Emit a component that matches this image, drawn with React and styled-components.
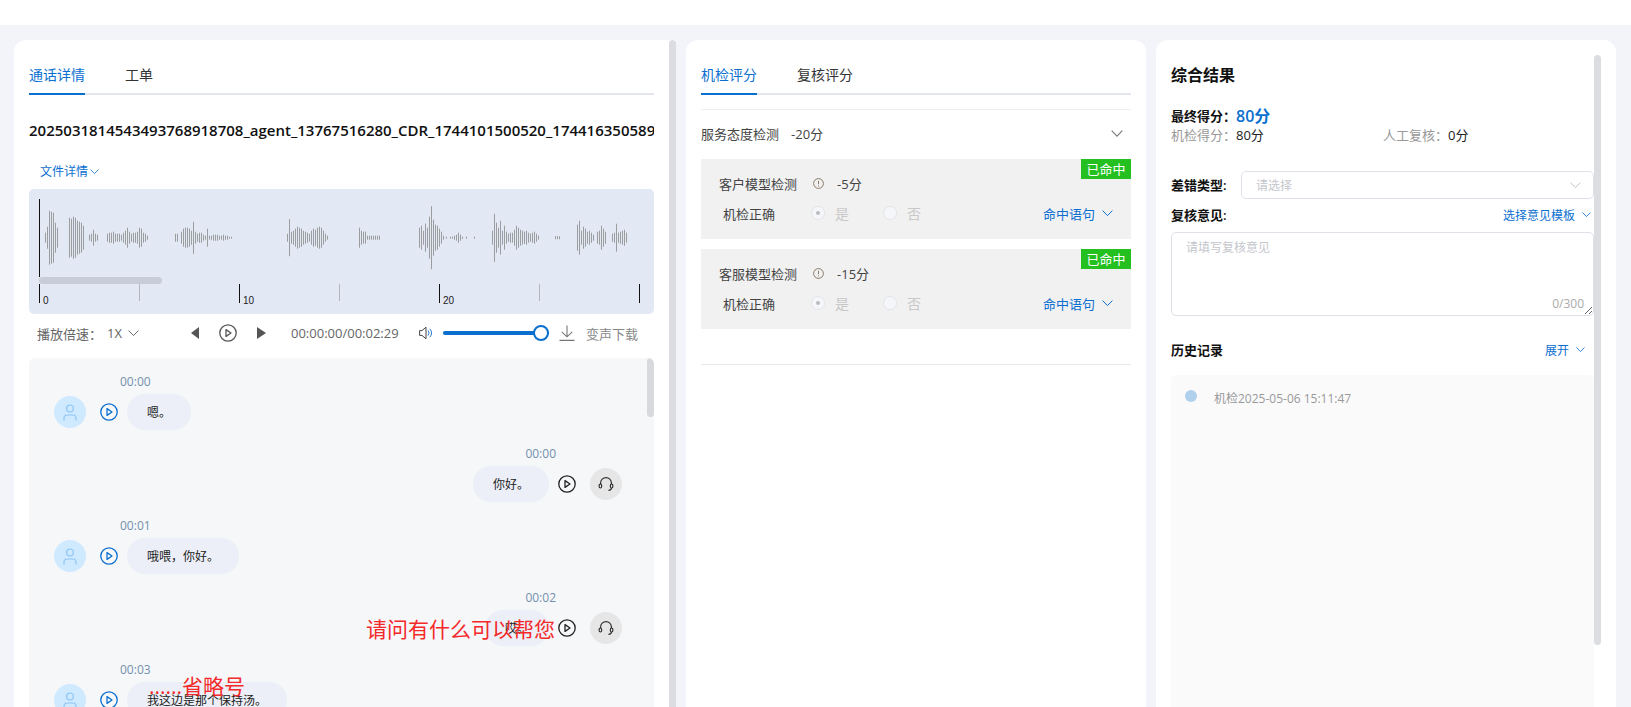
import styled, { createGlobalStyle } from 'styled-components'
import { Fragment } from 'react'

const BLUE = '#0b6fd0'

const GlobalStyle = createGlobalStyle`
    html, body {
        margin: 0;
        height: 100%;
        overflow: hidden;
    }
    body {
        background: #f3f4f9;
        font-family: "Open Sans", "Noto Sans CJK SC", sans-serif;
        font-size: 13px;
        color: #333;
    }
    * { box-sizing: border-box; }
`

const waveClusters = [
    [45, [10, 22, 54, 52, 50, 30, 20]],
    [69, [40, 38, 42, 40, 34, 32, 30, 24]],
    [89, [6, 8, 16, 8, 6]],
    [107, [8, 10, 10, 12, 8, 8, 8, 6, 10, 14, 20, 12, 8, 10, 10, 12, 20, 18, 10, 8, 4]],
    [175, [8, 8, 0, 12, 18, 20, 20, 18, 14, 32, 12, 8, 10, 10, 6, 4, 18, 4, 4, 6, 6, 6, 4, 4, 6, 4, 4, 2, 2]],
    [287, [8, 37, 12, 14, 18, 22, 20, 18, 14, 12, 10, 8, 14, 18, 16, 20, 22, 20, 14, 8, 4]],
    [359, [20, 14, 12, 12, 4, 4, 4, 4, 4, 4, 4]],
    [419, [20, 24, 14, 28, 20, 42, 63, 36, 26, 24, 18, 12, 4]],
    [446, [2, 0, 2, 2, 4, 6, 10, 6, 2, 0, 2, 0, 0, 0, 2]],
    [492, [14, 48, 30, 20, 34, 14, 24, 12, 8, 10, 10, 16, 24, 20, 16, 14, 12, 14, 10, 8, 10, 12, 8, 4]],
    [555, [3, 3, 3]],
    [577, [26, 34, 14, 22, 18, 12, 14, 10, 6]],
    [597, [12, 14, 24, 18, 12]],
    [612, [8, 10, 28, 10, 12, 14, 16, 10]],
]

const rulerTicks = [
    { x: 39.5, label: '0', major: true },
    { x: 139.5 },
    { x: 239.5, label: '10', major: true },
    { x: 339.5 },
    { x: 439.5, label: '20', major: true },
    { x: 539.5 },
    { x: 639.5, major: true },
]

const COLON = '\uFF1A'

const messages = [
    { time: '00:00', text: '嗯。', side: 'left' },
    { time: '00:00', text: '你好。', side: 'right' },
    { time: '00:01', text: '哦喂\uFF0C你好。', side: 'left' },
    { time: '00:02', text: '哎。', side: 'right' },
    { time: '00:03', text: '我这边是那个保持汤。', side: 'left' },
]

const checks = [
    { name: '客户模型检测', score: '-5分' },
    { name: '客服模型检测', score: '-15分' },
]

function Chevron({ size = 11, color = '#666' }) {
    return (
        <svg width={size} height={size * 0.6} viewBox="0 0 11 6.6" fill="none" stroke={color} strokeWidth="1">
            <path d="M.6.6l4.9 5 4.9-5" />
        </svg>
    )
}

function PlayIcon({ color = BLUE, size = 18 }) {
    return (
        <svg width={size} height={size} viewBox="0 0 18 18" fill="none" stroke={color} strokeWidth="1.3">
            <circle cx="9" cy="9" r="8.2" />
            <path d="M7 5.6v6.8l5-3.4z" strokeLinejoin="round" />
        </svg>
    )
}

function UserIcon() {
    return (
        <svg width="14" height="17" viewBox="0 0 14 17" fill="none" stroke="#8fc6f6" strokeWidth="1.2">
            <circle cx="7" cy="4.4" r="3.4" />
            <path d="M1 16.5v-2.3c0-2 1.5-3.2 3.2-3.2h5.6c1.7 0 3.2 1.2 3.2 3.2v2.3" />
        </svg>
    )
}

function HeadsetIcon() {
    return (
        <svg width="16" height="16" viewBox="0 0 16 16" fill="none" stroke="#333" strokeWidth="1.2">
            <path d="M2.6 8.2V7a5.4 5.4 0 0 1 10.8 0v1.2" />
            <rect x="1.2" y="8" width="2.4" height="4" rx="1.2" />
            <rect x="12.4" y="8" width="2.4" height="4" rx="1.2" />
            <path d="M13.4 12c0 1.5-1.2 2.3-3 2.3" />
        </svg>
    )
}

function VolumeIcon() {
    return (
        <svg width="13" height="14" viewBox="0 0 13 14" fill="none" stroke="#444" strokeWidth="1">
            <path d="M.6 4.6H3L7 1.2v11.6L3 9.4H.6z" strokeLinejoin="round" />
            <path d="M9 4.4a4 4 0 0 1 0 5.2M10.8 2.8a6.5 6.5 0 0 1 0 8.4" stroke="#2b79c9" />
        </svg>
    )
}

function DownloadIcon() {
    return (
        <svg width="16" height="16" viewBox="0 0 16 16" fill="none" stroke="#777" strokeWidth="1.1">
            <path d="M8 .5v11M2.8 6.8L8 11.8l5.2-5M.5 15.4h15" />
        </svg>
    )
}

function InfoIcon() {
    return (
        <svg width="11" height="11" viewBox="0 0 11 11" fill="none" stroke="#8a7a68" strokeWidth="1">
            <circle cx="5.5" cy="5.5" r="4.9" />
            <path d="M5.5 2.8v3.4M5.5 7.4v1" />
        </svg>
    )
}

function Waveform() {
    return (
        <svg width="625" height="125" viewBox="0 0 625 125">
            {waveClusters.map(([start, heights], c) =>
                heights.map((h, i) => (
                    <rect key={`${c}-${i}`} x={start - 29 + i * 2} y={48.7 - h / 2} width="1" height={h} fill="#9c9d9f" />
                ))
            )}
            <rect x="10" y="10" width="1" height="78" fill="#111" />
            <rect x="10" y="88" width="123" height="7" rx="3.5" fill="#c8ccd9" />
            {rulerTicks.map((t) => (
                <Fragment key={t.x}>
                    <rect x={t.x - 29.5} y="95" width="1" height={t.major ? 19 : 17} fill={t.major ? '#111' : '#b4b6bb'} />
                    {t.label && (
                        <text x={t.x - 29.5 + 4} y="114.5" fontSize="10" fontFamily="Liberation Sans, sans-serif" fill="#222">
                            {t.label}
                        </text>
                    )}
                </Fragment>
            ))}
        </svg>
    )
}

function ChatRow({ msg }) {
    const right = msg.side === 'right'
    return (
        <Row>
            <MsgTime $right={right}>{msg.time}</MsgTime>
            <MsgBody $right={right}>
                {right ? (
                    <>
                        <Bubble>{msg.text}</Bubble>
                        <PlayIcon color="#222" />
                        <Avatar $agent><HeadsetIcon /></Avatar>
                    </>
                ) : (
                    <>
                        <Avatar><UserIcon /></Avatar>
                        <PlayIcon />
                        <Bubble>{msg.text}</Bubble>
                    </>
                )}
            </MsgBody>
        </Row>
    )
}

function CheckCard({ item }) {
    return (
        <Card>
            <Badge>已命中</Badge>
            <CardHead>
                <span>{item.name}</span>
                <InfoIcon />
                <span>{item.score}</span>
            </CardHead>
            <CardLine>
                <CardLabel>机检正确</CardLabel>
                <RadioOption><Radio $checked />是</RadioOption>
                <RadioOption><Radio />否</RadioOption>
                <MoreLink>命中语句<Chevron color={BLUE} /></MoreLink>
            </CardLine>
        </Card>
    )
}

export default function App() {
    return (
        <>
            <GlobalStyle />
            <TopBar />
            <Main>
                <LeftPanel>
                    <LeftContent>
                        <Tabs>
                            <Tab $active>通话详情</Tab>
                            <Tab>工单</Tab>
                        </Tabs>
                        <FileTitle>2025031814543493768918708_agent_13767516280_CDR_1744101500520_174416350589</FileTitle>
                        <FileLink>文件详情<Chevron size={9} color={BLUE} /></FileLink>
                        <WaveBox><Waveform /></WaveBox>
                        <Controls>
                            <Speed>播放倍速{COLON}<SpeedValue>1X</SpeedValue><Chevron color="#666" /></Speed>
                            <Transport>
                                <svg width="8" height="12" viewBox="0 0 8 12"><path d="M8 0v12L0 6z" fill="#555" /></svg>
                                <PlayIcon color="#555" />
                                <svg width="9" height="12" viewBox="0 0 9 12"><path d="M0 0v12l9-6z" fill="#555" /></svg>
                            </Transport>
                            <TimeText>00:00:00/00:02:29</TimeText>
                            <VolumeIcon />
                            <Slider><SliderFill /><SliderKnob /></Slider>
                            <DownloadIcon />
                            <DownloadText>变声下载</DownloadText>
                        </Controls>
                        <Chat>
                            {messages.map((m, i) => <ChatRow key={i} msg={m} />)}
                            <ChatBar />
                            <RedNote $top={259} $left={337}>请问有什么可以帮您</RedNote>
                            <RedNote $top={316} $left={120}>......省略号</RedNote>
                        </Chat>
                    </LeftContent>
                    <PanelBar />
                </LeftPanel>

                <MiddlePanel>
                    <Tabs>
                        <Tab $active>机检评分</Tab>
                        <Tab $wide>复核评分</Tab>
                    </Tabs>
                    <Section>
                        <SectionHead>
                            <SectionName>服务态度检测</SectionName>
                            <span>-20分</span>
                            <SectionChevron><Chevron color="#777" size={12} /></SectionChevron>
                        </SectionHead>
                        <CardList>
                            {checks.map((c) => <CheckCard key={c.name} item={c} />)}
                        </CardList>
                    </Section>
                </MiddlePanel>

                <RightPanel>
                    <RightContent>
                        <ResultTitle>综合结果</ResultTitle>
                        <FinalScore>
                            <BoldLabel $width={65}>最终得分{COLON}</BoldLabel>
                            <FinalValue>80分</FinalValue>
                        </FinalScore>
                        <Stats>
                            <Stat $width={212}><StatLabel $width={65}>机检得分{COLON}</StatLabel>80分</Stat>
                            <Stat><StatLabel $width={65}>人工复核{COLON}</StatLabel>0分</Stat>
                        </Stats>
                        <SelectRow>
                            <BoldLabel $width={70}>差错类型:</BoldLabel>
                            <SelectBox>
                                请选择
                                <Chevron color="#c4c6cc" />
                            </SelectBox>
                        </SelectRow>
                        <OpinionHead>
                            <BoldLabel>复核意见:</BoldLabel>
                            <BlueLink $pad={3}>选择意见模板<Chevron color={BLUE} size={9} /></BlueLink>
                        </OpinionHead>
                        <OpinionWrap>
                            <Opinion placeholder="请填写复核意见" />
                            <Counter>0/300</Counter>
                        </OpinionWrap>
                        <HistoryHead>
                            <BoldLabel>历史记录</BoldLabel>
                            <BlueLink $pad={9}>展开<Chevron color={BLUE} size={9} /></BlueLink>
                        </HistoryHead>
                        <History>
                            <HistoryDot />
                            <HistoryText>机检2025-05-06 15:11:47</HistoryText>
                        </History>
                    </RightContent>
                    <RightBar />
                </RightPanel>
            </Main>
        </>
    )
}

const TopBar = styled.div`
    height: 25px;
    background: #fff;
`

const Main = styled.div`
    display: flex;
    height: 682px;
    padding: 15px 15px 0 14px;
`

const PanelBase = styled.div`
    background: #fff;
    border-radius: 12px 12px 0 0;
    height: 667px;
    overflow: hidden;
`

const LeftPanel = styled(PanelBase)`
    display: flex;
    width: 662px;
    padding-left: 15px;
    border-top-right-radius: 0;
`

const LeftContent = styled.div`
    display: flex;
    flex-direction: column;
    width: 625px;
    margin-right: 15px;
`

const PanelBar = styled.div`
    width: 7px;
    height: 100%;
    background: #dcdde0;
    border-radius: 4px 4px 0 0;
`

const Tabs = styled.div`
    display: flex;
    margin-top: 24px;
    flex-shrink: 0;
    border-bottom: 2px solid #e3e6ef;
`

const Tab = styled.div`
    height: 31px;
    line-height: 22px;
    font-size: 14px;
    margin: 0 ${({ $wide }) => ($wide ? 0 : '40px')} -2px 0;
    color: ${({ $active }) => ($active ? BLUE : '#333')};
    border-bottom: 2px solid ${({ $active }) => ($active ? BLUE : 'transparent')};
`

const FileTitle = styled.div`
    margin-top: 24px;
    line-height: 22px;
    font-size: 15px;
    font-weight: 600;
    color: #111;
    white-space: nowrap;
    overflow: hidden;
`

const FileLink = styled.div`
    display: flex;
    align-items: center;
    gap: 2px;
    margin: 21px 0 0 11px;
    line-height: 20px;
    font-size: 12px;
    color: ${BLUE};
`

const WaveBox = styled.div`
    height: 125px;
    margin-top: 7px;
    background: #e3e8f5;
    border-radius: 5px;
    flex-shrink: 0;
    svg { display: block; }
`

const Controls = styled.div`
    display: flex;
    align-items: center;
    height: 22px;
    margin-top: 8px;
    flex-shrink: 0;
    padding-left: 8px;
    color: #666;
`

const Speed = styled.div`
    display: flex;
    align-items: center;
    width: 154px;
    font-size: 13px;
`

const SpeedValue = styled.span`
    margin: 0 6px 0 5px;
`

const Transport = styled.div`
    display: flex;
    align-items: center;
    gap: 20px;
`

const TimeText = styled.span`
    width: 128px;
    margin-left: 25px;
    font-size: 13px;
    white-space: nowrap;
`

const Slider = styled.div`
    position: relative;
    width: 106px;
    height: 4px;
    margin: 0 10px 0 11px;
    border-radius: 2px;
    background: #d6dbe6;
`

const SliderFill = styled.div`
    height: 100%;
    border-radius: 2px;
    background: ${BLUE};
`

const SliderKnob = styled.div`
    position: absolute;
    right: 0;
    top: -6px;
    width: 16px;
    height: 16px;
    border-radius: 50%;
    background: #fff;
    border: 2.5px solid ${BLUE};
`

const DownloadText = styled.span`
    margin-left: 11px;
    font-size: 13px;
    color: #888;
    white-space: nowrap;
`

const Chat = styled.div`
    position: relative;
    flex: 1;
    min-height: 0;
    margin-top: 14px;
    padding-top: 15px;
    background: #f6f7f9;
    border-radius: 6px 6px 0 0;
    overflow: hidden;
`

const ChatBar = styled.div`
    position: absolute;
    top: 0;
    right: 0;
    width: 7px;
    height: 59px;
    background: #d8d9dc;
    border-radius: 4px;
`

const RedNote = styled.div`
    position: absolute;
    top: ${({ $top }) => $top}px;
    left: ${({ $left }) => $left}px;
    line-height: 24px;
    font-size: 21px;
    color: #f42a2a;
    white-space: nowrap;
`

const Row = styled.div`
    margin-bottom: 15px;
`

const MsgTime = styled.div`
    line-height: 18px;
    font-size: 12px;
    color: #7390ad;
    margin: 0 ${({ $right }) => ($right ? '98px' : 0)} 3px ${({ $right }) => ($right ? 0 : '91px')};
    text-align: ${({ $right }) => ($right ? 'right' : 'left')};
`

const MsgBody = styled.div`
    display: flex;
    align-items: center;
    justify-content: ${({ $right }) => ($right ? 'flex-end' : 'flex-start')};
    gap: 9px;
    padding: 0 ${({ $right }) => ($right ? '32px' : 0)} 0 ${({ $right }) => ($right ? 0 : '25px')};
`

const Avatar = styled.div`
    display: flex;
    align-items: center;
    justify-content: center;
    width: 32px;
    height: 32px;
    border-radius: 50%;
    margin: ${({ $agent }) => ($agent ? '0 0 0 5px' : '0 5px 0 0')};
    background: ${({ $agent }) => ($agent ? '#e6e6e6' : '#cfe9ff')};
`

const Bubble = styled.div`
    height: 36px;
    line-height: 37px;
    padding: 0 20px;
    border-radius: 18px;
    background: #eceff7;
    font-size: 12px;
    color: #222;
    white-space: nowrap;
`

const MiddlePanel = styled(PanelBase)`
    width: 460px;
    margin-left: 10px;
    padding: 0 15px;
`

const Section = styled.div`
    margin-top: 14px;
    padding-bottom: 35px;
    border-top: 1px solid #eceef3;
    border-bottom: 1px solid #e8eaf0;
`

const SectionHead = styled.div`
    display: flex;
    align-items: center;
    height: 49px;
    padding: 0 8px 2px 0;
    font-size: 13px;
    color: #444;
`

const SectionName = styled.span`
    margin-right: 12px;
`

const SectionChevron = styled.span`
    display: flex;
    margin-left: auto;
`

const CardList = styled.div`
    display: flex;
    flex-direction: column;
    gap: 10px;
`

const Card = styled.div`
    position: relative;
    height: 80px;
    padding-top: 14px;
    background: #f1f1f2;
    font-size: 13px;
    color: #444;
`

const Badge = styled.div`
    position: absolute;
    top: 0;
    right: 0;
    width: 50px;
    height: 20px;
    line-height: 20px;
    text-align: center;
    background: #23c01f;
    color: #fff;
    font-size: 13px;
`

const CardHead = styled.div`
    display: flex;
    align-items: center;
    height: 20px;
    gap: 16px;
    padding-left: 18px;
    svg { margin-right: -3px; }
`

const CardLine = styled.div`
    display: flex;
    align-items: center;
    height: 20px;
    margin-top: 10px;
    padding: 0 18px 0 22px;
`

const CardLabel = styled.span`
    width: 88px;
`

const RadioOption = styled.span`
    display: flex;
    align-items: center;
    gap: 10px;
    width: 72px;
    font-size: 14px;
    color: #c8c8c8;
`

const Radio = styled.span`
    display: flex;
    align-items: center;
    justify-content: center;
    width: 14px;
    height: 14px;
    border-radius: 50%;
    border: 1px solid #e3e5ea;
    background: #f5f6f9;
    &::after {
        content: '';
        width: 4px;
        height: 4px;
        border-radius: 50%;
        background: ${({ $checked }) => ($checked ? '#b9bbc0' : 'transparent')};
    }
`

const MoreLink = styled.span`
    display: flex;
    align-items: center;
    gap: 7px;
    margin-left: auto;
    color: ${BLUE};
`

const RightPanel = styled(PanelBase)`
    display: flex;
    width: 460px;
    margin-left: 10px;
    padding-left: 15px;
`

const RightContent = styled.div`
    width: 423px;
    padding-top: 24px;
`

const RightBar = styled.div`
    width: 7px;
    height: 590px;
    margin-top: 15px;
    background: #dcdde0;
    border-radius: 4px;
`

const ResultTitle = styled.div`
    line-height: 22px;
    font-size: 16px;
    font-weight: 600;
    color: #111;
`

const FinalScore = styled.div`
    display: flex;
    align-items: center;
    height: 20px;
    margin-top: 20px;
`

const BoldLabel = styled.span`
    flex-shrink: 0;
    width: ${({ $width }) => ($width ? `${$width}px` : 'auto')};
    margin-bottom: 2px;
    font-size: 13px;
    font-weight: 600;
    color: #111;
    white-space: nowrap;
`

const FinalValue = styled.span`
    margin-bottom: 2px;
    font-size: 16px;
    font-weight: 600;
    color: ${BLUE};
`

const Stats = styled.div`
    display: flex;
    margin-top: 1px;
    line-height: 16px;
    font-size: 13px;
    color: #222;
`

const Stat = styled.div`
    display: flex;
    width: ${({ $width }) => ($width ? `${$width}px` : 'auto')};
`

const StatLabel = styled.span`
    width: ${({ $width }) => $width}px;
    color: #999;
    white-space: nowrap;
`

const SelectRow = styled.div`
    display: flex;
    align-items: center;
    margin-top: 28px;
`

const SelectBox = styled.div`
    display: flex;
    align-items: center;
    justify-content: space-between;
    flex: 1;
    height: 28px;
    padding: 0 12px 0 14px;
    border: 1px solid #dfe1e8;
    border-radius: 5px;
    font-size: 12px;
    color: #c4c6cc;
`

const OpinionHead = styled.div`
    display: flex;
    align-items: center;
    justify-content: space-between;
    height: 16px;
    margin-top: 8px;
`

const BlueLink = styled.span`
    display: flex;
    align-items: center;
    gap: 7px;
    padding-right: ${({ $pad }) => $pad}px;
    font-size: 12px;
    color: ${BLUE};
`

const OpinionWrap = styled.div`
    position: relative;
    margin-top: 9px;
`

const Opinion = styled.textarea`
    display: block;
    width: 100%;
    height: 84px;
    padding: 5px 14px;
    border: 1px solid #dfe1e8;
    border-radius: 5px;
    outline: none;
    background: #fff;
    font-family: inherit;
    font-size: 12px;
    &::placeholder { color: #c4c6cc; }
`

const Counter = styled.span`
    position: absolute;
    right: 10px;
    bottom: 4px;
    line-height: 16px;
    font-size: 12px;
    color: #aaa;
`

const HistoryHead = styled.div`
    display: flex;
    align-items: center;
    justify-content: space-between;
    height: 20px;
    margin-top: 24px;
`

const History = styled.div`
    display: flex;
    align-items: flex-start;
    height: 340px;
    margin-top: 15px;
    padding: 15px 0 0 14px;
    background: #fafafb;
    border-radius: 5px 5px 0 0;
`

const HistoryDot = styled.span`
    width: 12px;
    height: 12px;
    margin-right: 17px;
    border-radius: 50%;
    background: #b1d0ec;
`

const HistoryText = styled.span`
    line-height: 18px;
    font-size: 12px;
    color: #999;
`
